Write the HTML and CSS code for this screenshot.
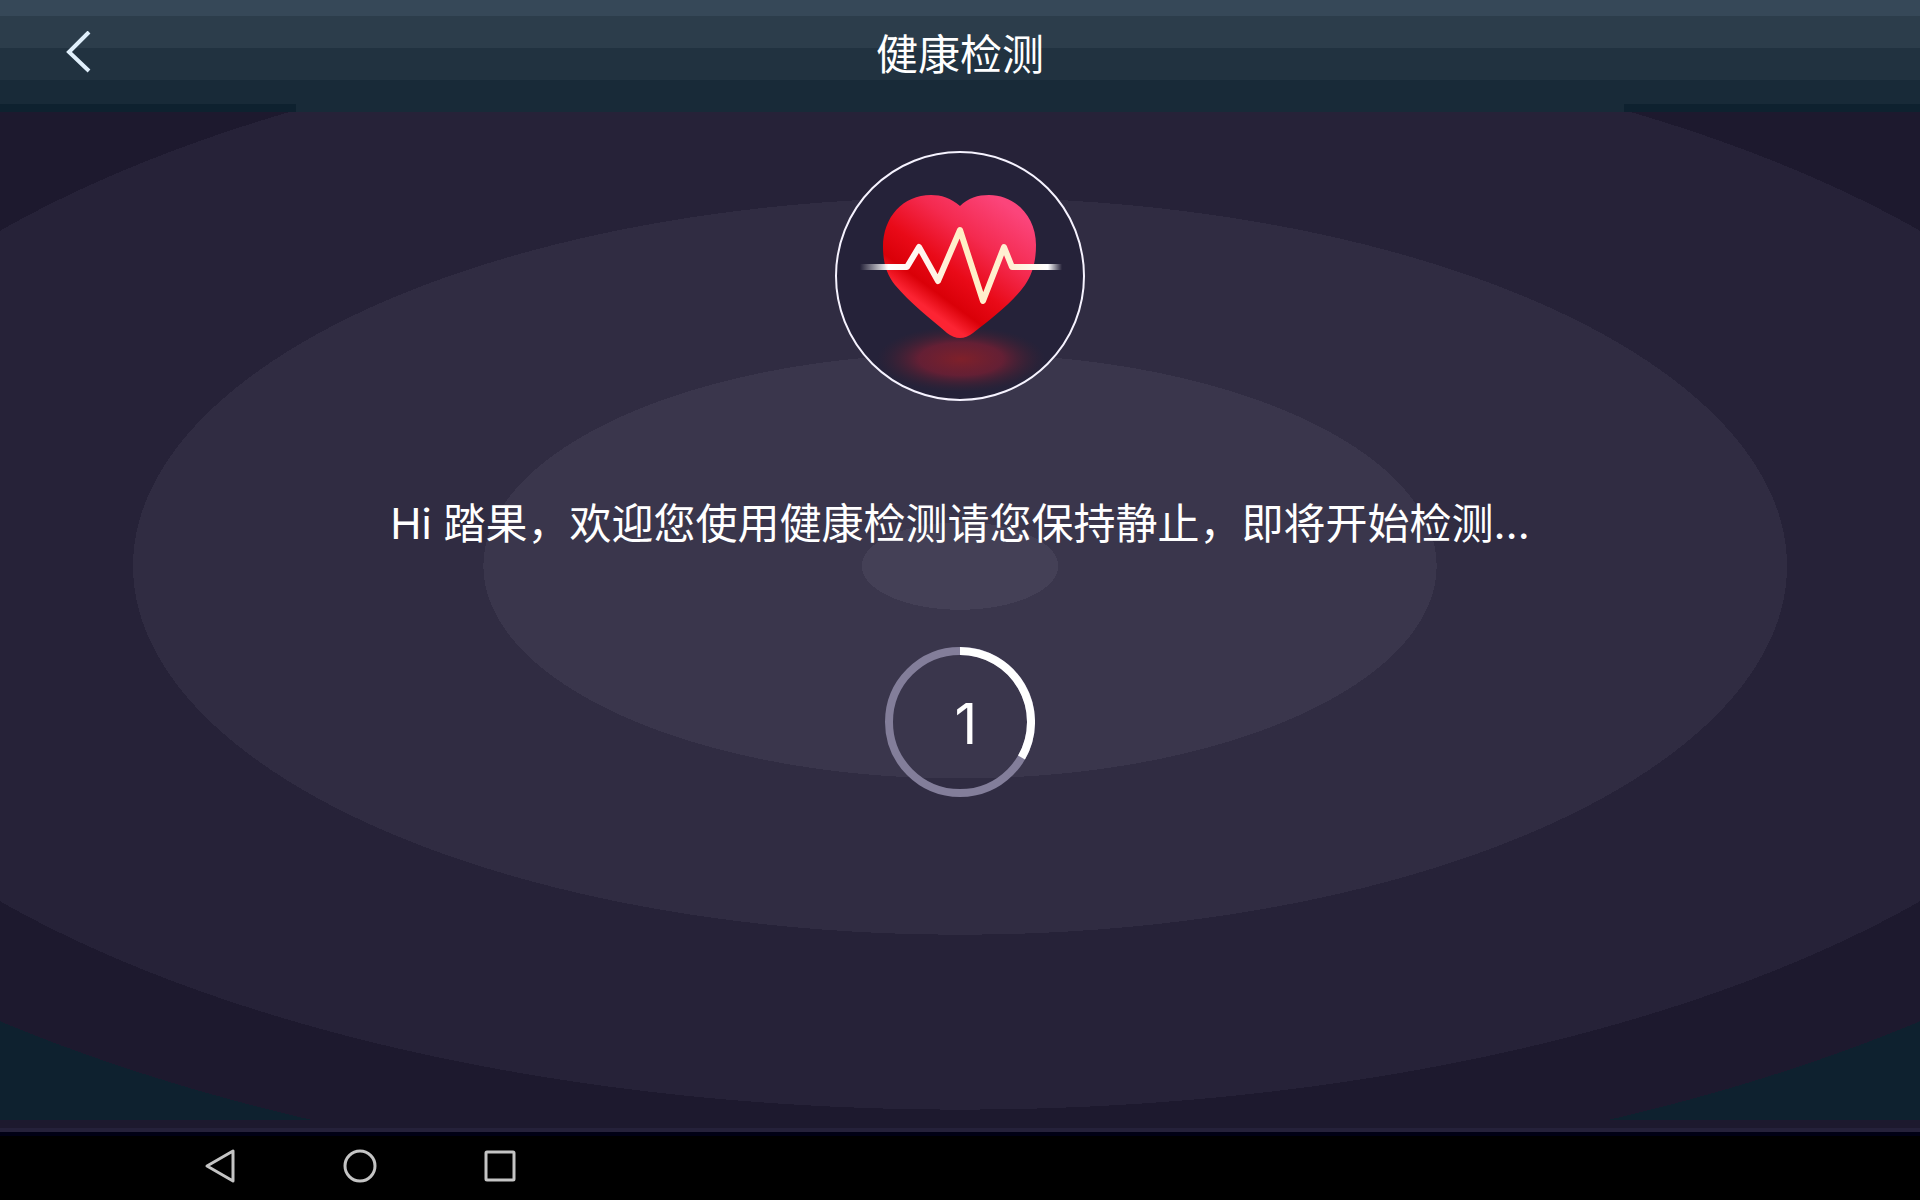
FILE: index.html
```html
<!DOCTYPE html>
<html lang="zh-CN">
<head>
<meta charset="utf-8">
<meta name="viewport" content="width=device-width, initial-scale=1">
<title>健康检测</title>
<link rel="stylesheet" href="styles.css">
</head>
<body>
<div class="stage">
  <header class="topbar">
    <button class="back" type="button" aria-label="返回">
      <svg width="32" height="48" viewBox="0 0 32 48" aria-hidden="true">
        <path d="M25 1 5 21l20 19" fill="none" stroke="#e0effb" stroke-width="4"/>
      </svg>
    </button>
    <h1 class="title">健康检测</h1>
  </header>
  <main class="content">
    <svg class="medallion" width="250" height="250" viewBox="0 0 250 250" aria-hidden="true">
      <defs>
        <linearGradient id="heart" x1="0.85" y1="0.1" x2="0.3" y2="0.8">
          <stop offset="0" stop-color="#fb457b"/>
          <stop offset="0.35" stop-color="#f42a4f"/>
          <stop offset="0.65" stop-color="#e90a18"/>
          <stop offset="0.86" stop-color="#da0008"/>
          <stop offset="1" stop-color="#fc2433"/>
        </linearGradient>
        <linearGradient id="pulse" gradientUnits="userSpaceOnUse" x1="25" y1="0" x2="227" y2="0">
          <stop offset="0" stop-color="#fff" stop-opacity="0"/>
          <stop offset="0.14" stop-color="#fff"/>
          <stop offset="0.35" stop-color="#fff3ea"/>
          <stop offset="0.5" stop-color="#ffefc4"/>
          <stop offset="0.75" stop-color="#fff0d4"/>
          <stop offset="0.93" stop-color="#fff"/>
          <stop offset="1" stop-color="#fff" stop-opacity="0"/>
        </linearGradient>
        <radialGradient id="glow">
          <stop offset="0" stop-color="#7f202a"/>
          <stop offset="0.5" stop-color="#6b1f34" stop-opacity="0.9"/>
          <stop offset="1" stop-color="#3c2030" stop-opacity="0"/>
        </radialGradient>
      </defs>
      <circle cx="125" cy="125" r="124" fill="#252239" stroke="#f6f3ff" stroke-width="2"/>
      <ellipse cx="126" cy="208" rx="84" ry="33" fill="url(#glow)"/>
      <path d="M125 55C116 47 106 44 96 44C68 44 48 66 48 96C48 112 52 124 60 134C74 151 96 168 112 182Q125 192 138 182C156 168 178 151 190 134C197 124 201 111 201 94C201 65 180 44 154 44C143 44 133 47 125 55Z" fill="url(#heart)"/>
      <path d="M25 116H72L84 96L103 130L125 79L148 150L169 96L177 116H227" fill="none" stroke="url(#pulse)" stroke-width="6" stroke-linejoin="round"/>
    </svg>
    <p class="message">Hi 踏果，欢迎您使用健康检测请您保持静止，即将开始检测…</p>
    <div class="countdown" role="timer">
      <svg class="ring" width="150" height="150" viewBox="0 0 150 150" aria-hidden="true">
        <circle cx="75" cy="75" r="71" fill="none" stroke="#837e9a" stroke-width="8"/>
        <path d="M75 4A71 71 0 0 1 136.5 110.500" fill="none" stroke="#fff" stroke-width="8"/>
      </svg>
      <span class="count">1</span>
    </div>
  </main>
</div>
<nav class="sysbar" aria-label="系统导航">
  <button class="key" type="button" aria-label="返回">
    <svg width="36" height="36" viewBox="0 0 36 36" aria-hidden="true"><path d="M31 3V33L5 18Z"/></svg>
  </button>
  <button class="key" type="button" aria-label="主页">
    <svg width="36" height="36" viewBox="0 0 36 36" aria-hidden="true"><circle cx="18" cy="18" r="15"/></svg>
  </button>
  <button class="key" type="button" aria-label="最近任务">
    <svg width="36" height="36" viewBox="0 0 36 36" aria-hidden="true"><rect x="4" y="4" width="28" height="28" rx="1"/></svg>
  </button>
</nav>
</body>
</html>
```
FILE: styles.css
```css
* {
  box-sizing: border-box;
}

body {
  margin: 0;
  min-height: 100vh;
  display: flex;
  flex-direction: column;
  background: #000;
  color: #fff;
  font-family: Inter, "Noto Sans CJK SC", sans-serif;
}

button {
  padding: 0;
  border: 0;
  background: none;
  cursor: pointer;
}

svg {
  display: block;
}

.stage {
  flex: 1;
  display: flex;
  flex-direction: column;
  background:
    linear-gradient(#1d192e 8px, #25213a 8px 12px, #000014 12px) bottom / 100% 16px no-repeat,
    radial-gradient(ellipse 73% 55% at 50% calc(50% - 2px),
      #444056 7%,
      #3a364c 7% 34%,
      #302c42 34% 59%,
      #262238 59% 87%,
      #1d192e 87% 100%,
      #0e212f 100%);
}

.topbar {
  height: 112px;
  padding: 0 64px 2px;
  display: grid;
  grid-template-columns: 1fr auto 1fr;
  align-items: center;
  background:
    linear-gradient(#0e212f, #0e212f) left bottom / 296px 8px no-repeat,
    linear-gradient(#0e212f, #0e212f) right bottom / 296px 8px no-repeat,
    linear-gradient(#364858 16px, #2c3d4b 16px 48px, #213240 48px 80px, #182a38 80px);
}

.back {
  justify-self: start;
}

.title {
  margin: 0;
  font-size: 42px;
  line-height: 60px;
  font-weight: 400;
}

.content {
  padding: 39px 24px;
  display: flex;
  flex-direction: column;
  align-items: center;
  gap: 93px;
}

.message {
  margin: 0;
  font-size: 42px;
  line-height: 60px;
  text-align: center;
}

.countdown {
  display: grid;
  place-items: center;
}

.ring,
.count {
  grid-area: 1 / 1;
}

.count {
  padding: 4px 0 0 12px;
  font-size: 56px;
  line-height: 64px;
}

.sysbar {
  height: 64px;
  padding: 0 202px 4px;
  display: flex;
  align-items: center;
  gap: 104px;
}

.key {
  fill: none;
  stroke: #c4c4c4;
  stroke-width: 3;
  stroke-linejoin: round;
}
```
